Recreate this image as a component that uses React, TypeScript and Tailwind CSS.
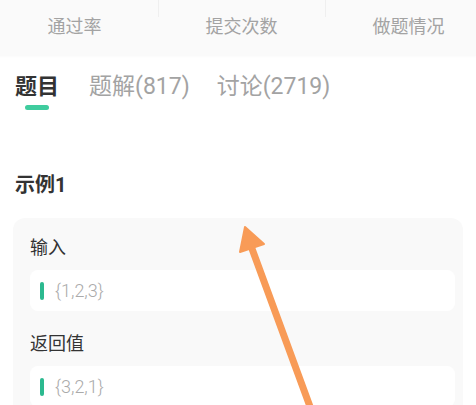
import React from 'react';

const font = { fontFamily: 'Roboto, "Noto Sans CJK SC", sans-serif' };

const stats = ['通过率', '提交次数', '做题情况'];

const Sample = ({ label, value }: { label: string; value: string }) => (
  <div>
    <div className="text-[18px] leading-[24px] text-[#333]">{label}</div>
    <div className="mt-[10px] h-[41px] bg-white rounded-lg flex items-center pl-[10px]">
      <span className="w-[4px] h-[18px] rounded-full bg-[#2bb98f]" />
      <span className="ml-[11px] text-[18px] text-[#aaa] font-light">{value}</span>
    </div>
  </div>
);

const App = () => {
  return (
    <div className="relative w-[476px] h-[405px] overflow-hidden bg-white" style={font}>
      {/* stats header */}
      <div className="h-[56px] bg-[#fafafa] flex -ml-[9px] shadow-[0_1px_2px_rgba(0,0,0,0.02)]">
        {stats.map((s, i) => (
          <div key={s} className="relative w-[167px] shrink-0 flex items-center justify-center pb-[4px]">
            {i > 0 && <span className="absolute left-0 top-0 h-[17px] w-px bg-[#efefef]" />}
            <span className="text-[18px] text-[#a3a3a3]">{s}</span>
          </div>
        ))}
      </div>

      {/* tabs */}
      <div className="flex items-start pl-[15px] pt-[16px] gap-[30px]">
        <div className="flex flex-col items-center">
          <span className="text-[22px] leading-[30px] font-bold text-[#333]">题目</span>
          <span className="mt-[3px] w-[24px] h-[5px] rounded-full bg-[#3fcc9e]" />
        </div>
        <span className="text-[23px] leading-[30px] text-[#a3a3a3]">题解(817)</span>
        <span className="-ml-[3px] text-[23px] leading-[30px] text-[#a3a3a3]">讨论(2719)</span>
      </div>

      {/* example */}
      <div className="mt-[62px] px-[15px] text-[20px] leading-[26px] font-bold text-[#333]">示例1</div>

      <div className="mt-[20px] ml-[13px] mr-[13px] bg-[#f9f9f9] rounded-xl pt-[18px] pl-[17px] pr-[8px] pb-6 flex flex-col gap-[21px]">
        <Sample label="输入" value="{1,2,3}" />
        <Sample label="返回值" value="{3,2,1}" />
      </div>

      {/* annotation arrow */}
      <svg className="absolute inset-0 pointer-events-none" width="476" height="405" viewBox="0 0 476 405">
        <line x1="312" y1="412" x2="251" y2="246" stroke="#f89b57" strokeWidth="7" strokeLinecap="round" />
        <polygon points="245,227 240,252 264,244" fill="#f89b57" stroke="#f89b57" strokeWidth="2" strokeLinejoin="round" />
      </svg>
    </div>
  );
};

export default App;
